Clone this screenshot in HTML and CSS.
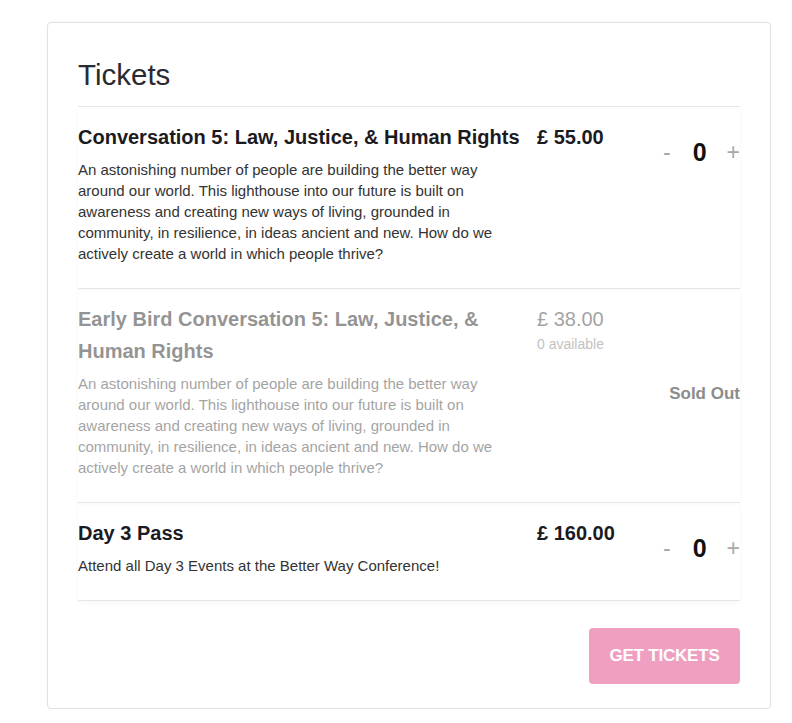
FILE: index.html
```html
<!DOCTYPE html>
<html lang="en">
<head>
<meta charset="utf-8">
<title>Tickets</title>
<link rel="stylesheet" href="styles.css">
</head>
<body>
<div class="card">
  <h2 class="card-title">Tickets</h2>

  <div class="ticket">
    <div class="ticket-info">
      <div class="ticket-name">Conversation 5: Law, Justice, &amp; Human Rights</div>
      <p class="ticket-desc">An astonishing number of people are building the better way around our world. This lighthouse into our future is built on awareness and creating new ways of living, grounded in community, in resilience, in ideas ancient and new. How do we actively create a world in which people thrive?</p>
    </div>
    <div class="ticket-price">£ 55.00</div>
    <div class="qty">
      <span class="qty-btn minus">-</span>
      <span class="qty-val">0</span>
      <span class="qty-btn plus">+</span>
    </div>
  </div>

  <div class="ticket ticket-soldout">
    <div class="ticket-info faded">
      <div class="ticket-name">Early Bird Conversation 5: Law, Justice, &amp; Human Rights</div>
      <p class="ticket-desc">An astonishing number of people are building the better way around our world. This lighthouse into our future is built on awareness and creating new ways of living, grounded in community, in resilience, in ideas ancient and new. How do we actively create a world in which people thrive?</p>
    </div>
    <div class="ticket-price faded">
      <div>£ 38.00</div>
      <div class="avail">0 available</div>
    </div>
    <div class="soldout">Sold Out</div>
  </div>

  <div class="ticket ticket-last">
    <div class="ticket-info">
      <div class="ticket-name">Day 3 Pass</div>
      <p class="ticket-desc">Attend all Day 3 Events at the Better Way Conference!</p>
    </div>
    <div class="ticket-price">£ 160.00</div>
    <div class="qty">
      <span class="qty-btn minus">-</span>
      <span class="qty-val">0</span>
      <span class="qty-btn plus">+</span>
    </div>
  </div>

  <div class="actions">
    <button class="get-btn" type="button">GET TICKETS</button>
  </div>
</div>
</body>
</html>
```

FILE: styles.css
```css
* { box-sizing: border-box; }

html, body {
  margin: 0;
  padding: 0;
  background: #ffffff;
  font-family: "Liberation Sans", Arial, sans-serif;
  color: #1b1b1f;
}

.card {
  width: 724px;
  margin: 22px 0 0 47px;
  padding: 35px 30px 24px 30px;
  border: 1px solid #e2e2e2;
  border-radius: 4px;
  box-shadow: 0 0 2px rgba(0, 0, 0, 0.06);
  background: #fff;
}

.card-title {
  margin: 0 0 14px 0;
  font-size: 29.5px;
  line-height: 34px;
  font-weight: normal;
  color: #2a2a32;
}

.ticket {
  display: grid;
  grid-template-columns: 447px 1fr auto;
  column-gap: 12px;
  padding: 14px 0 24px 0;
  border-top: 1px solid #e6e6e6;
  box-shadow: 0 2px 4px rgba(0, 0, 0, 0.035);
}

.ticket-last {
  border-bottom: 1px solid #e6e6e6;
}

.ticket-name {
  font-size: 20px;
  line-height: 32px;
  font-weight: bold;
  color: #1b1b1f;
}

.ticket-desc {
  margin: 6px 0 0 0;
  font-size: 15px;
  line-height: 21px;
  color: #333;
  max-width: 440px;
}

.ticket-price {
  font-size: 20px;
  line-height: 32px;
  font-weight: bold;
  color: #1b1b1f;
}

.avail {
  font-size: 14px;
  line-height: 18px;
  font-weight: normal;
  color: #777;
}

.faded {
  opacity: 0.45;
}

.ticket-soldout .ticket-price {
  font-weight: normal;
  color: #333;
}

.ticket-soldout .ticket-name {
  font-weight: bold;
  color: #111;
}

.qty {
  display: flex;
  align-items: center;
  gap: 20px;
  margin-top: 15px;
  height: 32px;
  align-self: start;
}

.qty-btn {
  color: #a8a8a8;
  font-size: 23px;
  line-height: 32px;
}

.qty-btn.minus {
  margin-right: 2px;
}

.qty-val {
  font-size: 25px;
  line-height: 32px;
  font-weight: bold;
  color: #111;
}

.soldout {
  align-self: center;
  padding-top: 6px;
  font-size: 17px;
  font-weight: bold;
  color: #8c8c8c;
}

.actions {
  display: flex;
  justify-content: flex-end;
  margin-top: 27px;
}

.get-btn {
  width: 151px;
  height: 56px;
  border: none;
  border-radius: 4px;
  background: #ef9fc0;
  color: #fff;
  font-family: "Liberation Sans", Arial, sans-serif;
  font-size: 17px;
  font-weight: bold;
  letter-spacing: -0.2px;
  cursor: pointer;
}
```
